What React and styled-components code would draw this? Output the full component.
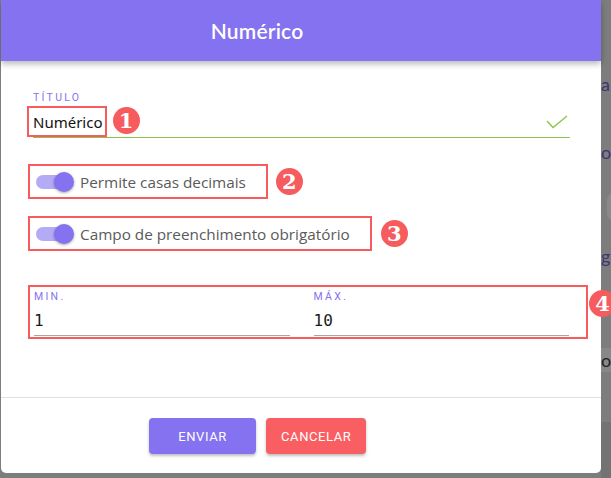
import React from "react";
import styled, { createGlobalStyle } from "styled-components";

const GlobalStyle = createGlobalStyle`
  html, body { margin: 0; padding: 0; }
  body {
    background: #7d7d7d;
    font-family: "Open Sans", "Noto Sans", sans-serif;
    overflow: hidden;
  }
`;

const PURPLE = "#8472f0";
const RED = "#f95f62";
const MARK = "#f65c5e";

const Page = styled.div`
  display: flex;
  width: 611px;
  height: 478px;
  padding-left: 1px;
  box-sizing: border-box;
  overflow: hidden;
`;

const Dialog = styled.div`
  width: 600px;
  height: 473px;
  flex: none;
  background: #fff;
  border-radius: 0 0 5px 5px;
  display: flex;
  flex-direction: column;
  position: relative;
  z-index: 1;
`;

const Header = styled.header`
  height: 61px;
  flex: none;
  background: ${PURPLE};
  display: flex;
  align-items: center;
  justify-content: center;
  padding-right: 88px;
  box-shadow: 0 3px 6px rgba(0, 0, 0, 0.28);
  position: relative;
  z-index: 1;
`;

const Title = styled.h1`
  margin: 0;
  color: #fff;
  font-family: "Lato", "Noto Sans", sans-serif;
  font-size: 21px;
  font-weight: 600;
  letter-spacing: 0.2px;
`;

const Body = styled.div`
  flex: 1;
  display: flex;
  flex-direction: column;
  padding: 31px 0 0 32px;
`;

const Field = styled.div`
  display: flex;
  flex-direction: column;
  flex: none;
  width: ${(p) => p.$width}px;
`;

const Label = styled.label`
  font-family: "Roboto", sans-serif;
  font-size: 10.5px;
  line-height: 12px;
  letter-spacing: 2.3px;
  color: ${PURPLE};
  text-transform: uppercase;
`;

const InputRow = styled.div`
  display: flex;
  align-items: flex-end;
  height: ${(p) => p.$height}px;
  border-bottom: 1px solid ${(p) => p.$line};
`;

const Mark = styled.div`
  border: 2px solid ${MARK};
  box-sizing: border-box;
  display: flex;
  flex: none;
  align-items: center;
  height: ${(p) => p.$height}px;
  margin-left: ${(p) => p.$ml || 0}px;
  padding: ${(p) => p.$pad || "0"};
`;

const Value = styled.span`
  font-family: "Noto Sans", sans-serif;
  font-size: 15px;
  color: #111;
`;

const Badge = styled.div`
  width: 27px;
  height: 27px;
  border-radius: 50%;
  background: ${MARK};
  color: #fff;
  font-family: "DejaVu Serif", serif;
  font-weight: 700;
  font-size: 21px;
  line-height: 27px;
  text-align: center;
  flex: none;
  align-self: ${(p) => p.$align || "center"};
  margin-left: ${(p) => p.$ml}px;
  margin-top: ${(p) => p.$mt || 0}px;
`;

const Spacer = styled.div`
  flex: 1;
`;

const Check = styled.svg`
  align-self: center;
  margin-right: 2px;
  margin-top: 2px;
`;

const ToggleLine = styled.div`
  display: flex;
  flex: none;
  align-items: center;
  margin-top: ${(p) => p.$mt}px;
  margin-left: -5px;
`;

const Track = styled.div`
  width: 35px;
  height: 14px;
  border-radius: 7px;
  background: #b4abf7;
  margin: 0 9px 0 6px;
  display: flex;
  align-items: center;
  justify-content: flex-end;
`;

const Thumb = styled.div`
  width: 20px;
  height: 20px;
  border-radius: 50%;
  background: ${PURPLE};
  box-shadow: 0 1px 3px rgba(0, 0, 0, 0.35);
  margin-right: -3px;
`;

const ToggleText = styled.span`
  font-family: "Open Sans", "Noto Sans", sans-serif;
  font-size: 15.3px;
  color: #5a5a5a;
  white-space: nowrap;
  padding-right: ${(p) => p.$pr}px;
`;

const RangeLine = styled.div`
  display: flex;
  flex: none;
  align-items: flex-start;
  margin-top: 34px;
  margin-left: -5px;
`;

const RangeBox = styled.div`
  border: 2px solid ${MARK};
  width: 560px;
  height: 54px;
  flex: none;
  box-sizing: border-box;
  display: flex;
  gap: 24px;
  padding: 4px 17px 1px 4px;
`;

const RangeField = styled.div`
  flex: 1;
  display: flex;
  flex-direction: column;
`;

const NumValue = styled.span`
  font-family: "DejaVu Sans Mono", monospace;
  font-size: 16px;
  color: #1a1a1a;
  padding-bottom: 5px;
`;

const Footer = styled.footer`
  height: 76px;
  flex: none;
  border-top: 1px solid #e0e0e0;
  display: flex;
  gap: 10px;
  padding: 20px 0 0 148px;
  box-sizing: border-box;
`;

const Button = styled.button`
  height: 36px;
  min-width: ${(p) => p.$minw || 0}px;
  padding: 0 15px;
  border: none;
  border-radius: 4px;
  background: ${(p) => p.$bg};
  color: #fff;
  font-family: "Roboto", sans-serif;
  font-weight: 400;
  font-size: 13px;
  letter-spacing: 0.6px;
  box-shadow: 0 2px 3px rgba(0, 0, 0, 0.25);
`;

const Backdrop = styled.div`
  flex: 1;
  overflow: hidden;
  display: flex;
  flex-direction: column;
  font-family: "Lato", sans-serif;
  font-size: 18px;
  color: #3e3670;
`;

const Frag = styled.div`
  height: ${(p) => p.$h}px;
  flex: none;
  background: ${(p) => p.$bg || "transparent"};
  color: ${(p) => p.$c || "#3e3670"};
  white-space: nowrap;
  margin-left: ${(p) => p.$ml || 0}px;
  line-height: ${(p) => p.$h}px;
  border-radius: ${(p) => p.$r || 0}px;
  width: ${(p) => (p.$w ? p.$w + "px" : "auto")};
`;

function Toggle() {
  return (
    <Track>
      <Thumb />
    </Track>
  );
}

export default function App() {
  return (
    <>
      <GlobalStyle />
      <Page>
        <Dialog>
          <Header>
            <Title>Numérico</Title>
          </Header>
          <Body>
            <Field $width={537}>
              <Label>Título</Label>
              <InputRow $height={33} $line="#8bc34a">
                <Mark $height={31} $ml={-6} $pad="0 2px 0 4px">
                  <Value>Numérico</Value>
                </Mark>
                <Badge $ml={6}>1</Badge>
                <Spacer />
                <Check width="22" height="14" viewBox="0 0 22 14">
                  <polyline points="1,6 7,12.5 21,1" fill="none" stroke="#8bc34a" strokeWidth="1.3" />
                </Check>
              </InputRow>
            </Field>

            <ToggleLine $mt={26}>
              <Mark $height={35} $pad="0">
                <Toggle />
                <ToggleText $pr={20}>Permite casas decimais</ToggleText>
              </Mark>
              <Badge $ml={8}>2</Badge>
            </ToggleLine>

            <ToggleLine $mt={17}>
              <Mark $height={35} $pad="0">
                <Toggle />
                <ToggleText $pr={20}>Campo de preenchimento obrigatório</ToggleText>
              </Mark>
              <Badge $ml={9}>3</Badge>
            </ToggleLine>

            <RangeLine>
              <RangeBox>
                <RangeField>
                  <Label>Min.</Label>
                  <InputRow $height={32} $line="#a3a6ad">
                    <NumValue>1</NumValue>
                  </InputRow>
                </RangeField>
                <RangeField>
                  <Label>Máx.</Label>
                  <InputRow $height={32} $line="#a3a6ad">
                    <NumValue>10</NumValue>
                  </InputRow>
                </RangeField>
              </RangeBox>
              <Badge $ml={1} $align="flex-start" $mt={5}>4</Badge>
            </RangeLine>
          </Body>
          <Footer>
            <Button $bg={PURPLE} $minw={107}>ENVIAR</Button>
            <Button $bg={RED}>CANCELAR</Button>
          </Footer>
        </Dialog>
        <Backdrop>
          <Frag $h={72} />
          <Frag $h={24}>a</Frag>
          <Frag $h={44} />
          <Frag $h={24}>o</Frag>
          <Frag $h={26} />
          <Frag $h={34} $bg="#8a8a8a" $r={17} $w={24} $ml={6} />
          <Frag $h={20} />
          <Frag $h={24}>g</Frag>
          <Frag $h={80} />
          <Frag $h={24} $c="#222" $bg="#888">o</Frag>
          <Frag $h={50} />
          <Frag $h={70} $bg="#737373" />
        </Backdrop>
      </Page>
    </>
  );
}
